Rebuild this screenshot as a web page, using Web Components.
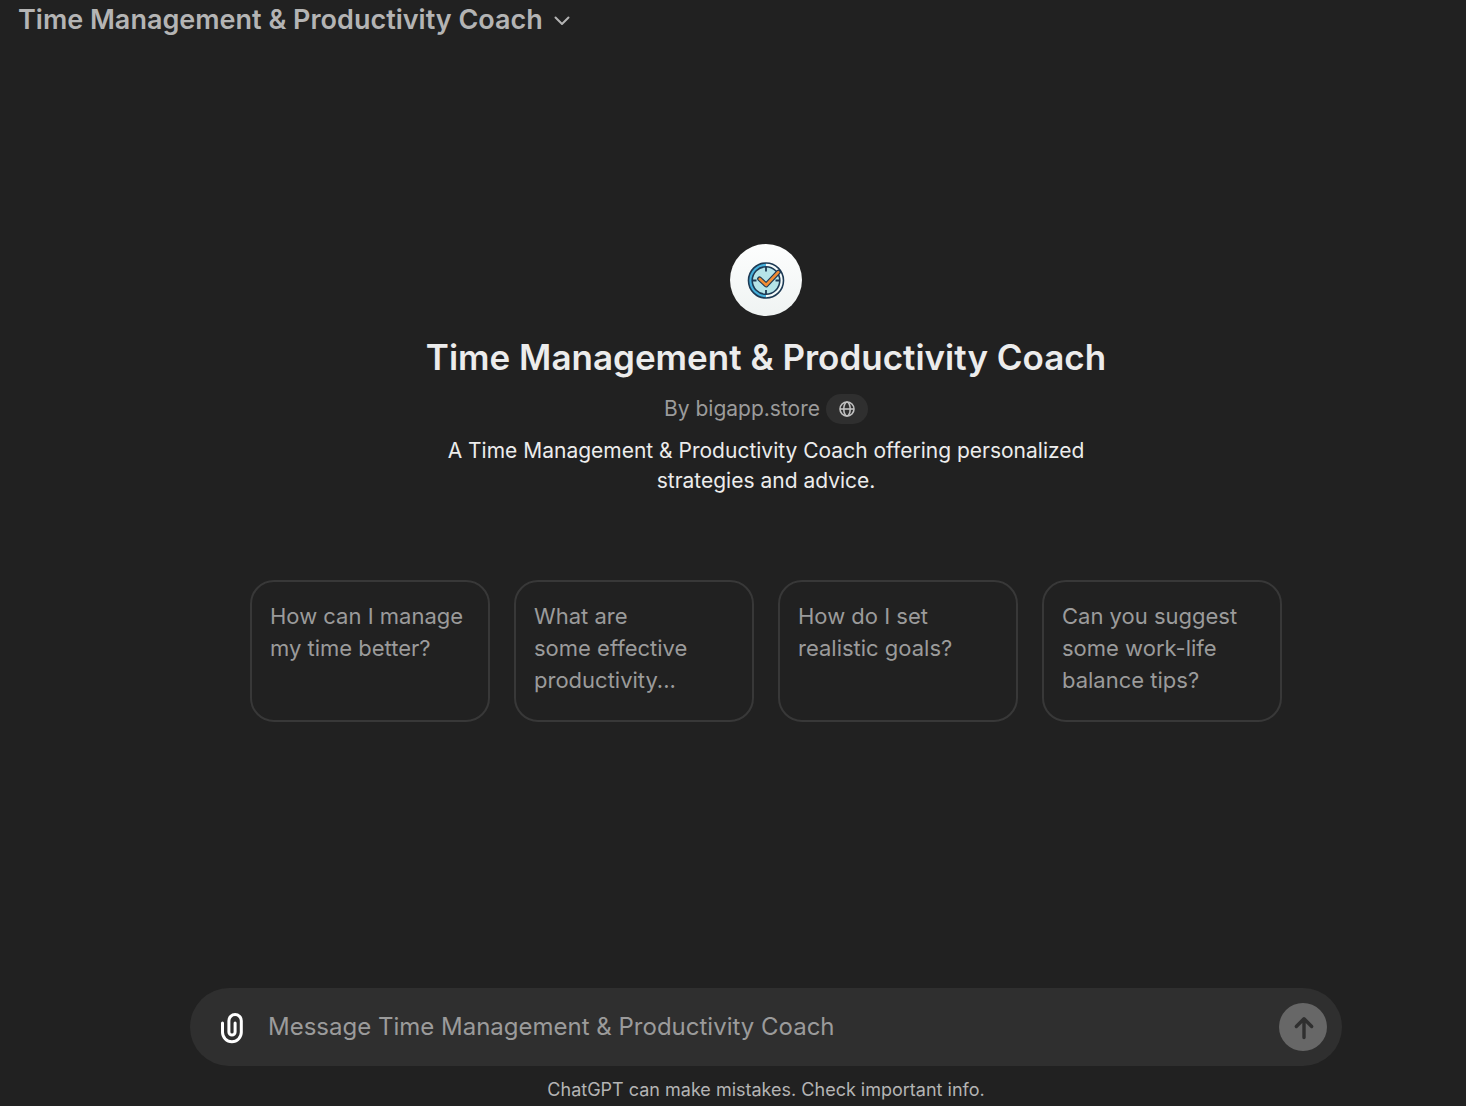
<!DOCTYPE html>
<html lang="en">
<head>
<meta charset="UTF-8">
<meta name="viewport" content="width=device-width, initial-scale=1">
<title>Time Management &amp; Productivity Coach</title>
<style>
  body {
    margin: 0;
    background: #212121;
    color: #ececec;
    font-family: Inter, "Liberation Sans", sans-serif;
  }
</style>
</head>
<body>
<chat-page>
  <model-title slot="header">Time Management &amp; Productivity Coach</model-title>

  <coach-hero>
    <coach-logo slot="logo"></coach-logo>
    <span slot="name">Time Management &amp; Productivity Coach</span>
    <span slot="author">By bigapp.store</span>
    <span slot="about">A Time Management &amp; Productivity Coach offering personalized strategies and advice.</span>
  </coach-hero>

  <prompt-list>
    <prompt-card>How can I manage my time better?</prompt-card>
    <prompt-card>What are some&nbsp;effective productivity...</prompt-card>
    <prompt-card>How do I set realistic goals?</prompt-card>
    <prompt-card>Can you suggest some work-life balance tips?</prompt-card>
  </prompt-list>

  <message-bar slot="footer" placeholder="Message Time Management &amp; Productivity Coach">ChatGPT can make mistakes. Check important info.</message-bar>
</chat-page>

<script>
class ChatPage extends HTMLElement {
  constructor() {
    super();
    this.shadow = this.attachShadow({ mode: "open" });
  }

  connectedCallback() {
    this.shadow.innerHTML = `
      <style>
  :host {
    display: flex;
    flex-direction: column;
    min-height: 100vh;
  }

  header {
    padding: 0 18px;
  }

  main {
    flex: 1;
    display: flex;
    flex-direction: column;
    align-items: center;
    justify-content: center;
    gap: 84px;
    padding: 24px 24px 86px 90px;
  }

  footer {
    padding: 0 24px 4px 90px;
  }

  @media screen and (max-width: 900px) {
    main, footer {
      padding-left: 24px;
    }
  }
</style>

<header><slot name="header"></slot></header>
<main><slot></slot></main>
<footer><slot name="footer"></slot></footer>
    `;
  }
}

class ModelTitle extends HTMLElement {
  constructor() {
    super();
    this.shadow = this.attachShadow({ mode: "open" });
  }

  connectedCallback() {
    this.shadow.innerHTML = `
      <style>
  :host {
    display: block;
  }

  button {
    display: flex;
    align-items: center;
    gap: 10px;
    padding: 0;
    border: 0;
    background: none;
    color: #b4b4b4;
    font: 600 27px/40px Inter, "Liberation Sans", sans-serif;
    text-align: left;
    cursor: pointer;
  }

  svg {
    flex: none;
  }
</style>

<button type="button">
  <slot></slot>
  <svg width="18" height="18" viewBox="0 0 18 18" fill="none" stroke="#b4b4b4" stroke-width="2" stroke-linecap="round" stroke-linejoin="round" aria-hidden="true">
    <path d="M2.500 6.500 9 13l6.500-6.500"/>
  </svg>
</button>
    `;
  }
}

class CoachLogo extends HTMLElement {
  constructor() {
    super();
    this.shadow = this.attachShadow({ mode: "open" });
  }

  connectedCallback() {
    this.shadow.innerHTML = `
      <style>
  :host {
    display: block;
    width: 72px;
    height: 72px;
    border-radius: 50%;
    background: linear-gradient(#fdfefe, #eff3f2);
  }

  svg {
    display: block;
  }
</style>

<svg width="72" height="72" viewBox="0 0 72 72" fill="none" aria-hidden="true">
  <circle cx="36" cy="36.500" r="17.500" fill="#f4fbfb"/>
  <path d="M36 19a17.500 17.500 0 0 0 0 35z" fill="#45b0dc"/>
  <circle cx="36" cy="36.500" r="17.500" stroke="#1d3a54" stroke-width="1.600"/>
  <circle cx="36" cy="36.500" r="13.800" fill="#b5e4e8" stroke="#1d3a54" stroke-width="1.600"/>
  <path d="M36 23v4.500M36 46v4.500M22.500 36.500h4M45.500 36.500h4" stroke="#1d3a54" stroke-width="1.800"/>
  <path d="M29.500 34.800 36.200 41 48.500 28" stroke="#1d3a54" stroke-width="4.800" stroke-linecap="round" stroke-linejoin="round"/>
  <path d="M29.800 35 36.200 41 48.300 28.200" stroke="#f28c32" stroke-width="2.600" stroke-linecap="round" stroke-linejoin="round"/>
</svg>
    `;
  }
}

class CoachHero extends HTMLElement {
  constructor() {
    super();
    this.shadow = this.attachShadow({ mode: "open" });
  }

  connectedCallback() {
    this.shadow.innerHTML = `
      <style>
  :host {
    display: flex;
    flex-direction: column;
    align-items: center;
    max-width: 704px;
    text-align: center;
  }

  h1 {
    margin: 20px 0 16px;
    font-size: 35px;
    line-height: 42px;
    font-weight: 600;
  }

  .author {
    display: flex;
    align-items: center;
    gap: 6px;
    color: #9b9b9b;
    font-size: 21px;
    line-height: 30px;
  }

  a {
    display: flex;
    align-items: center;
    padding: 7px 13px;
    border-radius: 15px;
    background: #2f2f2f;
  }

  p {
    margin: 12px 0 0;
    font-size: 21px;
    line-height: 30px;
  }
</style>

<slot name="logo"></slot>
<h1><slot name="name"></slot></h1>
<div class="author">
  <slot name="author"></slot>
  <a href="#" aria-label="Website">
    <svg width="16" height="16" viewBox="0 0 16 16" fill="none" stroke="#c0c0c0" stroke-width="1.600" aria-hidden="true">
      <circle cx="8" cy="8" r="7"/>
      <ellipse cx="8" cy="8" rx="3.200" ry="7"/>
      <path d="M1 8h14"/>
    </svg>
  </a>
</div>
<p><slot name="about"></slot></p>
    `;
  }
}

class PromptList extends HTMLElement {
  constructor() {
    super();
    this.shadow = this.attachShadow({ mode: "open" });
  }

  connectedCallback() {
    this.shadow.innerHTML = `
      <style>
  :host {
    display: grid;
    grid-template-columns: repeat(4, 1fr);
    gap: 24px;
    width: 100%;
    max-width: 1032px;
  }

  @media screen and (max-width: 1100px) {
    :host {
      grid-template-columns: repeat(2, 1fr);
    }
  }
</style>

<slot></slot>
    `;
  }
}

class PromptCard extends HTMLElement {
  constructor() {
    super();
    this.shadow = this.attachShadow({ mode: "open" });
  }

  connectedCallback() {
    this.shadow.innerHTML = `
      <style>
  :host {
    display: flex;
  }

  button {
    display: flex;
    align-items: flex-start;
    flex: 1;
    padding: 18px 18px 24px;
    border: 2px solid #383838;
    border-radius: 24px;
    background: none;
    color: #9b9b9b;
    font: 400 22px/32px Inter, "Liberation Sans", sans-serif;
    text-align: left;
    cursor: pointer;
  }

  span {
    text-wrap: balance;
  }
</style>

<button type="button"><span><slot></slot></span></button>
    `;
  }
}

class MessageBar extends HTMLElement {
  constructor() {
    super();
    this.shadow = this.attachShadow({ mode: "open" });
  }

  connectedCallback() {
    this.shadow.innerHTML = `
      <style>
  :host {
    display: block;
    max-width: 1152px;
    margin: 0 auto;
  }

  form {
    display: flex;
    align-items: center;
    padding: 15px 15px 15px 24px;
    border-radius: 39px;
    background: #2f2f2f;
  }

  button {
    display: flex;
    flex: none;
    align-items: center;
    justify-content: center;
    padding: 0;
    border: 0;
    background: none;
    cursor: pointer;
  }

  .attach {
    width: 36px;
    height: 48px;
  }

  .send {
    width: 48px;
    height: 48px;
    border-radius: 50%;
    background: #676767;
  }

  input {
    flex: 1;
    min-width: 0;
    margin: 0 18px;
    padding: 0;
    border: 0;
    outline: 0;
    background: none;
    color: #ececec;
    font: 400 24px/48px Inter, "Liberation Sans", sans-serif;
  }

  input::placeholder {
    color: #9b9b9b;
    opacity: 1;
  }

  p {
    margin: 12px 0 0;
    color: #b4b4b4;
    font-size: 18px;
    line-height: 24px;
    text-align: center;
  }
</style>

<form>
  <button class="attach" type="button" aria-label="Attach file">
    <svg width="36" height="36" viewBox="0 0 36 36" fill="none" stroke="#fff" stroke-width="3" stroke-linecap="round" aria-hidden="true">
      <path d="M8.500 14v9.300a9.400 9.400 0 0 0 18.800 0V11.700a6.200 6.200 0 0 0-12.400 0v11.300a3.100 3.100 0 0 0 6.200 0V14"/>
    </svg>
  </button>
  <input type="text" aria-label="Message">
  <button class="send" type="submit" aria-label="Send message">
    <svg width="48" height="48" viewBox="0 0 48 48" fill="none" stroke="#2f2f2f" stroke-width="3.400" stroke-linecap="round" stroke-linejoin="round" aria-hidden="true">
      <path d="M25 34.500V16M17.300 23.500 25 15.800l7.700 7.700"/>
    </svg>
  </button>
</form>
<p><slot></slot></p>
    `;
    this.shadow.querySelector("input").placeholder = this.getAttribute("placeholder");
    this.shadow.querySelector("form").addEventListener("submit", (e) => e.preventDefault());
  }
}

window.customElements.define("chat-page", ChatPage);
window.customElements.define("model-title", ModelTitle);
window.customElements.define("coach-logo", CoachLogo);
window.customElements.define("coach-hero", CoachHero);
window.customElements.define("prompt-list", PromptList);
window.customElements.define("prompt-card", PromptCard);
window.customElements.define("message-bar", MessageBar);
</script>
</body>
</html>
